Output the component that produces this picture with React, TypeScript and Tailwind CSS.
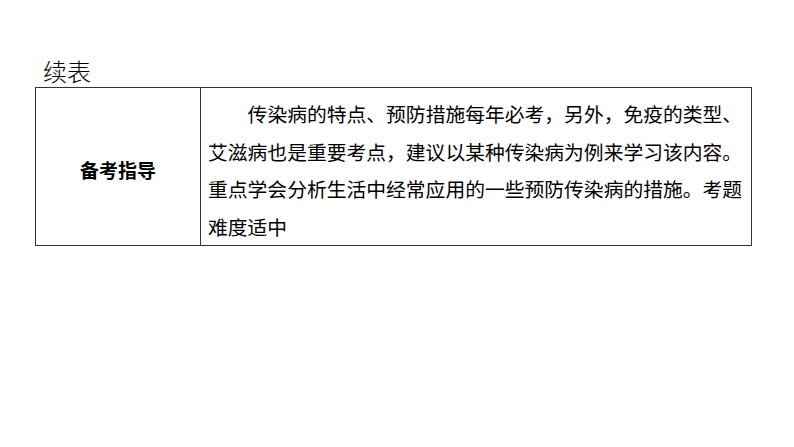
import React from "react";

const cjk = '"Noto Sans CJK SC", "Noto Sans", sans-serif';

export default function App() {
  const lines = [
    "传染病的特点、预防措施每年必考，另外，免疫的类型、",
    "艾滋病也是重要考点，建议以某种传染病为例来学习该内容。",
    "重点学会分析生活中经常应用的一些预防传染病的措施。考题",
    "难度适中",
  ];
  return (
    <div className="w-[794px] h-[447px] bg-white text-black" style={{ fontFamily: cjk }}>
      <div className="pt-[55px] pl-[43px] text-[24px] leading-[32px] font-light">续表</div>
      <div className="ml-[35px] w-[717px] border border-[#333] flex">
        <div className="w-[165px] shrink-0 border-r border-[#333] flex items-center justify-center text-[19px] font-bold pt-[8px]">
          备考指导
        </div>
        <div className="flex-1 pl-[7px] pt-[7px] pb-0 text-[19.8px] leading-[37.5px] whitespace-nowrap">
          {lines.map((l, i) => (
            <div key={i} className={i === 0 ? "pl-[2em]" : ""}>
              {l}
            </div>
          ))}
        </div>
      </div>
    </div>
  );
}
